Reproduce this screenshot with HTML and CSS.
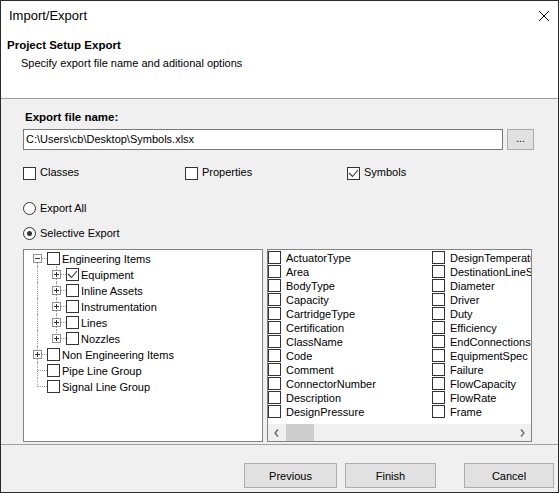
FILE: index.html
```html
<!DOCTYPE html>
<html>
<head>
<meta charset="utf-8">
<link rel="stylesheet" href="styles.css">
</head>
<body>
<div class="window">
  <div class="titlebar">
    <span class="title">Import/Export</span>
    <svg class="close" width="10" height="10" viewBox="0 0 10 10"><path d="M0 0L10 10M10 0L0 10" stroke="#000" stroke-width="1"/></svg>
  </div>
  <div class="header">
    <div class="h-title">Project Setup Export</div>
    <div class="h-sub">Specify export file name and aditional options</div>
  </div>
  <div class="main">
    <div class="label">Export file name:</div>
    <div class="file-row">
      <div class="textbox">C:\Users\cb\Desktop\Symbols.xlsx</div>
      <div class="browse">...</div>
    </div>
    <div class="checks">
      <div class="check"><span class="cb"></span><span class="txt">Classes</span></div>
      <div class="check"><span class="cb"></span><span class="txt">Properties</span></div>
      <div class="check"><span class="cb"><svg class="tick" viewBox="0 0 11 11"><path d="M1 5L4.5 8.5L10 2" fill="none" stroke="#333" stroke-width="1.1"/></svg></span><span class="txt">Symbols</span></div>
    </div>
    <div class="radio first"><span class="rb"></span><span class="txt">Export All</span></div>
    <div class="radio second"><span class="rb"><span class="dot"></span></span><span class="txt">Selective Export</span></div>
    <div class="panes">
      <div class="tree">
        <div class="row">
          <span class="cell node v-down"><svg class="exp" width="9" height="9" viewBox="0 0 9 9"><rect x="0.5" y="0.5" width="8" height="8" fill="#fff" stroke="#919191"/><path d="M2 4.5h5" stroke="#333"/></svg></span>
          <span class="cb"></span><span class="txt">Engineering Items</span>
        </div>
        <div class="row">
          <span class="cell v-full"></span>
          <span class="cell node v-full"><svg class="exp" width="9" height="9" viewBox="0 0 9 9"><rect x="0.5" y="0.5" width="8" height="8" fill="#fff" stroke="#919191"/><path d="M2 4.5h5M4.5 2v5" stroke="#333"/></svg></span>
          <span class="cb"><svg class="tick" viewBox="0 0 11 11"><path d="M1 5L4.5 8.5L10 2" fill="none" stroke="#333" stroke-width="1.1"/></svg></span><span class="txt">Equipment</span>
        </div>
        <div class="row">
          <span class="cell v-full"></span>
          <span class="cell node v-full"><svg class="exp" width="9" height="9" viewBox="0 0 9 9"><rect x="0.5" y="0.5" width="8" height="8" fill="#fff" stroke="#919191"/><path d="M2 4.5h5M4.5 2v5" stroke="#333"/></svg></span>
          <span class="cb"></span><span class="txt">Inline Assets</span>
        </div>
        <div class="row">
          <span class="cell v-full"></span>
          <span class="cell node v-full"><svg class="exp" width="9" height="9" viewBox="0 0 9 9"><rect x="0.5" y="0.5" width="8" height="8" fill="#fff" stroke="#919191"/><path d="M2 4.5h5M4.5 2v5" stroke="#333"/></svg></span>
          <span class="cb"></span><span class="txt">Instrumentation</span>
        </div>
        <div class="row">
          <span class="cell v-full"></span>
          <span class="cell node v-full"><svg class="exp" width="9" height="9" viewBox="0 0 9 9"><rect x="0.5" y="0.5" width="8" height="8" fill="#fff" stroke="#919191"/><path d="M2 4.5h5M4.5 2v5" stroke="#333"/></svg></span>
          <span class="cb"></span><span class="txt">Lines</span>
        </div>
        <div class="row">
          <span class="cell v-full"></span>
          <span class="cell node v-up"><svg class="exp" width="9" height="9" viewBox="0 0 9 9"><rect x="0.5" y="0.5" width="8" height="8" fill="#fff" stroke="#919191"/><path d="M2 4.5h5M4.5 2v5" stroke="#333"/></svg></span>
          <span class="cb"></span><span class="txt">Nozzles</span>
        </div>
        <div class="row">
          <span class="cell node v-full"><svg class="exp" width="9" height="9" viewBox="0 0 9 9"><rect x="0.5" y="0.5" width="8" height="8" fill="#fff" stroke="#919191"/><path d="M2 4.5h5M4.5 2v5" stroke="#333"/></svg></span>
          <span class="cb"></span><span class="txt">Non Engineering Items</span>
        </div>
        <div class="row">
          <span class="cell node v-full"></span>
          <span class="cb"></span><span class="txt">Pipe Line Group</span>
        </div>
        <div class="row">
          <span class="cell node v-up"></span>
          <span class="cb"></span><span class="txt">Signal Line Group</span>
        </div>
      </div>
      <div class="list">
        <div class="items">
          <div class="li"><span class="cb"></span><span class="txt">ActuatorType</span></div>
          <div class="li"><span class="cb"></span><span class="txt">Area</span></div>
          <div class="li"><span class="cb"></span><span class="txt">BodyType</span></div>
          <div class="li"><span class="cb"></span><span class="txt">Capacity</span></div>
          <div class="li"><span class="cb"></span><span class="txt">CartridgeType</span></div>
          <div class="li"><span class="cb"></span><span class="txt">Certification</span></div>
          <div class="li"><span class="cb"></span><span class="txt">ClassName</span></div>
          <div class="li"><span class="cb"></span><span class="txt">Code</span></div>
          <div class="li"><span class="cb"></span><span class="txt">Comment</span></div>
          <div class="li"><span class="cb"></span><span class="txt">ConnectorNumber</span></div>
          <div class="li"><span class="cb"></span><span class="txt">Description</span></div>
          <div class="li"><span class="cb"></span><span class="txt">DesignPressure</span></div>
          <div class="li"><span class="cb"></span><span class="txt">DesignTemperature</span></div>
          <div class="li"><span class="cb"></span><span class="txt">DestinationLineSegment</span></div>
          <div class="li"><span class="cb"></span><span class="txt">Diameter</span></div>
          <div class="li"><span class="cb"></span><span class="txt">Driver</span></div>
          <div class="li"><span class="cb"></span><span class="txt">Duty</span></div>
          <div class="li"><span class="cb"></span><span class="txt">Efficiency</span></div>
          <div class="li"><span class="cb"></span><span class="txt">EndConnections</span></div>
          <div class="li"><span class="cb"></span><span class="txt">EquipmentSpec</span></div>
          <div class="li"><span class="cb"></span><span class="txt">Failure</span></div>
          <div class="li"><span class="cb"></span><span class="txt">FlowCapacity</span></div>
          <div class="li"><span class="cb"></span><span class="txt">FlowRate</span></div>
          <div class="li"><span class="cb"></span><span class="txt">Frame</span></div>
        </div>
        <div class="hscroll">
          <span class="arrow"><svg width="5" height="8" viewBox="0 0 5 8"><path d="M4 0.5L1 4L4 7.5" fill="none" stroke="#606060" stroke-width="1.2"/></svg></span>
          <span class="thumb"></span>
          <span class="track"></span>
          <span class="arrow"><svg width="5" height="8" viewBox="0 0 5 8"><path d="M1 0.5L4 4L1 7.5" fill="none" stroke="#606060" stroke-width="1.2"/></svg></span>
        </div>
      </div>
    </div>
  </div>
  <div class="footer">
    <button class="btn prev">Previous</button>
    <button class="btn finish">Finish</button>
    <button class="btn cancel">Cancel</button>
  </div>
</div>
</body>
</html>
```

FILE: styles.css
```css
* { box-sizing: border-box; }
html, body { margin: 0; padding: 0; }
body {
  font-family: "Liberation Sans", Arial, sans-serif;
  font-size: 11px;
  color: #000;
  background: #fff;
}
.window {
  width: 559px;
  height: 493px;
  border: 1px solid #2b2b2b;
  background: #f0f0f0;
  display: flex;
  flex-direction: column;
}
.titlebar {
  height: 30px;
  flex: none;
  background: #fff;
  display: flex;
  align-items: center;
  justify-content: space-between;
  padding: 0 9px 0 8px;
}
.title { font-size: 13px; line-height: 30px; }
.close { display: block; margin-top: -1px; }
.header {
  height: 68px;
  flex: none;
  background: #fff;
  border-bottom: 1px solid #a0a0a0;
  padding: 7px 0 0 6px;
}
.h-title { font-weight: bold; font-size: 11.5px; line-height: 14px; }
.h-sub { margin-top: 4px; padding-left: 14px; line-height: 14px; }

.main {
  height: 346px;
  flex: none;
  padding: 11px 24px 0 22px;
  border-bottom: 1px solid #a0a0a0;
}
.label { font-weight: bold; font-size: 11.5px; line-height: 14px; margin-left: 2px; }
.file-row { display: flex; gap: 4px; margin-top: 5px; height: 21px; }
.textbox {
  flex: 1;
  border: 1px solid #7a7a7a;
  background: #fff;
  padding-left: 2px;
  line-height: 18px;
  white-space: nowrap;
}
.browse {
  width: 27px;
  border: 1px solid #adadad;
  background: #e1e1e1;
  text-align: center;
  line-height: 17px;
}
.checks { display: flex; margin-top: 17px; height: 13px; }
.check { display: flex; align-items: flex-start; width: 162px; }
.check .txt { line-height: 10px; white-space: nowrap; }
.cb {
  width: 13px;
  height: 13px;
  flex: none;
  border: 1px solid #333;
  background: #fff;
  margin-right: 4px;
  display: flex;
}
.tick { width: 11px; height: 11px; display: block; }
.radio { display: flex; height: 13px; }
.radio.first { margin-top: 22px; }
.radio.second { margin-top: 12px; }
.radio .txt { line-height: 13px; }
.rb {
  width: 13px;
  height: 13px;
  flex: none;
  border: 1px solid #333;
  border-radius: 50%;
  background: #fff;
  margin-right: 4px;
  display: flex;
  align-items: center;
  justify-content: center;
}
.dot { width: 5px; height: 5px; border-radius: 50%; background: #333; }

.panes { display: flex; gap: 4px; margin-top: 9px; height: 193px; margin-right: 2px; }
.tree {
  width: 240px;
  flex: none;
  border: 1px solid #828282;
  background: #fff;
  padding-left: 4px;
}
.row { display: flex; height: 16px; }
.row .cb { margin: 2px 0 0 0; }
.row .txt { padding: 2px 0 0 2px; line-height: 14px; white-space: nowrap; }
.cell {
  width: 19px;
  height: 16px;
  flex: none;
  position: relative;
  display: flex;
  justify-content: center;
  align-items: flex-start;
  padding-top: 4px;
}
.cell::before {
  content: "";
  position: absolute;
  left: 9px;
  border-left: 1px dotted #a0a0a0;
}
.v-full::before { top: 0; bottom: 0; }
.v-down::before { top: 8px; bottom: 0; }
.v-up::before { top: 0; height: 9px; }
.node::after {
  content: "";
  position: absolute;
  left: 10px;
  right: 0;
  top: 8px;
  border-top: 1px dotted #a0a0a0;
}
.exp { display: block; position: relative; z-index: 1; }

.list {
  flex: 1;
  border: 1px solid #828282;
  background: #fff;
  display: flex;
  flex-direction: column;
}
.items {
  flex: 1;
  display: grid;
  grid-template-columns: 164px minmax(0, 1fr);
  grid-template-rows: repeat(12, 14px);
  grid-auto-flow: column;
  overflow: hidden;
}
.li { display: flex; align-items: flex-start; min-width: 0; white-space: nowrap; }
.li .cb { margin: 1px 5px 0 0; }
.li .txt { padding-top: 2px; line-height: 12px; }
.hscroll { height: 17px; flex: none; background: #f0f0f0; display: flex; }
.arrow { width: 17px; display: flex; align-items: center; justify-content: center; }
.arrow svg { display: block; }
.thumb { width: 28px; margin-left: 1px; background: #cdcdcd; }
.track { flex: 1; }

.footer {
  flex: 1;
  display: flex;
  justify-content: flex-end;
  align-items: flex-start;
  padding: 18px 4px 0 0;
}
.btn {
  height: 25px;
  border: 1px solid #adadad;
  background: #e1e1e1;
  font: inherit;
  color: #000;
  padding: 0;
  margin: 0;
}
.prev { width: 93px; margin-right: 8px; }
.finish { width: 91px; margin-right: 28px; }
.cancel { width: 90px; }
```
